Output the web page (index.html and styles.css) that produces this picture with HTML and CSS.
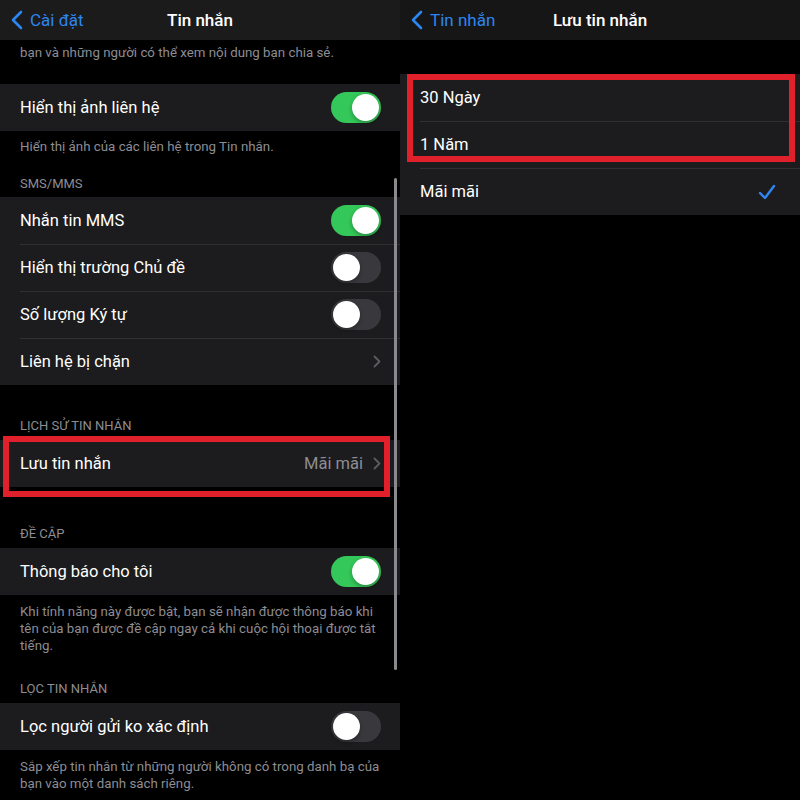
FILE: index.html
```html
<!DOCTYPE html>
<html lang="vi">
<head>
<meta charset="utf-8">
<title>Tin nhắn</title>
<link rel="stylesheet" href="styles.css">
</head>
<body>
<div class="screen">
  <section class="panel panel-left">
    <header class="nav nav-left">
      <div class="back">
        <svg class="back-chev" width="12" height="20" viewBox="0 0 12 20"><path d="M10 2 L2 10 L10 18" fill="none" stroke="#2d86f0" stroke-width="2.6" stroke-linecap="round" stroke-linejoin="round"/></svg>
        <span>Cài đặt</span>
      </div>
      <div class="nav-title">Tin nhắn</div>
    </header>

    <p class="note note-top">bạn và những người có thể xem nội dung bạn chia sẻ.</p>

    <div class="group">
      <div class="row"><span class="label">Hiển thị ảnh liên hệ</span><span class="toggle on"><span class="knob"></span></span></div>
    </div>
    <p class="note">Hiển thị ảnh của các liên hệ trong Tin nhắn.</p>

    <h2 class="sec sec-sms">SMS/MMS</h2>
    <div class="group">
      <div class="row"><span class="label">Nhắn tin MMS</span><span class="toggle on"><span class="knob"></span></span></div>
      <div class="row"><span class="label">Hiển thị trường Chủ đề</span><span class="toggle"><span class="knob"></span></span></div>
      <div class="row"><span class="label">Số lượng Ký tự</span><span class="toggle"><span class="knob"></span></span></div>
      <div class="row"><span class="label">Liên hệ bị chặn</span><svg class="chev" width="8" height="13" viewBox="0 0 8 13"><path d="M1.5 1.5 L6.5 6.5 L1.5 11.5" fill="none" stroke="#5c5c60" stroke-width="1.8" stroke-linecap="round" stroke-linejoin="round"/></svg></div>
    </div>

    <h2 class="sec sec-history">LỊCH SỬ TIN NHẮN</h2>
    <div class="group">
      <div class="row row-marked"><span class="label">Lưu tin nhắn</span><span class="value">Mãi mãi</span><svg class="chev" width="8" height="13" viewBox="0 0 8 13"><path d="M1.5 1.5 L6.5 6.5 L1.5 11.5" fill="none" stroke="#5c5c60" stroke-width="1.8" stroke-linecap="round" stroke-linejoin="round"/></svg></div>
    </div>

    <h2 class="sec sec-mention">ĐỀ CẬP</h2>
    <div class="group">
      <div class="row"><span class="label">Thông báo cho tôi</span><span class="toggle on"><span class="knob"></span></span></div>
    </div>
    <p class="note note-long">Khi tính năng này được bật, bạn sẽ nhận được thông báo khi tên của bạn được đề cập ngay cả khi cuộc hội thoại được tắt tiếng.</p>

    <h2 class="sec sec-filter">LỌC TIN NHẮN</h2>
    <div class="group">
      <div class="row"><span class="label">Lọc người gửi ko xác định</span><span class="toggle"><span class="knob"></span></span></div>
    </div>
    <p class="note note-long">Sắp xếp tin nhắn từ những người không có trong danh bạ của bạn vào một danh sách riêng.</p>

    <div class="scrollbar"></div>
  </section>

  <section class="panel panel-right">
    <header class="nav nav-right">
      <div class="back">
        <svg class="back-chev" width="12" height="20" viewBox="0 0 12 20"><path d="M10 2 L2 10 L10 18" fill="none" stroke="#2d86f0" stroke-width="2.6" stroke-linecap="round" stroke-linejoin="round"/></svg>
        <span>Tin nhắn</span>
      </div>
      <div class="nav-title">Lưu tin nhắn</div>
    </header>

    <div class="group group-options">
      <div class="row"><span class="label">30 Ngày</span></div>
      <div class="row"><span class="label">1 Năm</span></div>
      <div class="row"><span class="label">Mãi mãi</span><svg class="check" width="18" height="16" viewBox="0 0 18 16"><path d="M2 9 L7 14 L16 2" fill="none" stroke="#2f86f2" stroke-width="2.4" stroke-linecap="round" stroke-linejoin="round"/></svg></div>
      <div class="mark mark-options"></div>
    </div>
  </section>
</div>
</body>
</html>
```

FILE: styles.css
```css
*, *::before, *::after { box-sizing: border-box; }
html, body { margin: 0; padding: 0; background: #000; }
body {
  font-family: Roboto, "Noto Sans", "Liberation Sans", sans-serif;
  color: #fff;
  -webkit-font-smoothing: antialiased;
}
.screen {
  display: flex;
  width: 800px;
  height: 800px;
  overflow: hidden;
  background: #000;
}
.panel {
  position: relative;
  width: 400px;
  height: 800px;
  overflow: hidden;
  background: #000;
}
.nav {
  position: relative;
  height: 40px;
  display: flex;
  align-items: center;
  justify-content: center;
}
.nav-left { background: #1b1b1c; }
.nav-right { background: #161617; }
.back {
  position: absolute;
  left: 11px;
  top: 0;
  height: 40px;
  display: flex;
  align-items: center;
  gap: 7px;
  color: #2d86f0;
  font-size: 17px;
}
.back-chev { display: block; }
.nav-title {
  font-size: 17px;
  font-weight: 500;
  color: #fff;
}
.note {
  margin: 0;
  padding: 7px 16px 0 20px;
  font-size: 13.3px;
  line-height: 17px;
  color: #8d8d93;
}
.note-top { padding-top: 4px; margin-bottom: 23px; }
.note-long { padding-top: 8px; }
.sec {
  margin: 0;
  padding: 20px 20px 5px;
  font-size: 13px;
  line-height: 17px;
  font-weight: 400;
  color: #8d8d93;
}
.sec-history { padding-top: 32px; padding-bottom: 6px; }
.sec-mention { padding-top: 38px; padding-bottom: 6px; }
.sec-filter { padding-top: 26px; padding-bottom: 6px; }
.group {
  position: relative;
  background: #1c1c1e;
}
.row {
  position: relative;
  height: 47px;
  display: flex;
  align-items: center;
  padding: 0 20px;
}
.row + .row::before {
  content: "";
  position: absolute;
  left: 20px;
  right: 0;
  top: 0;
  height: 1px;
  background: #303033;
}
.label {
  flex: 1;
  font-size: 16.5px;
  color: #fff;
}
.value {
  font-size: 16.5px;
  color: #8d8d93;
  margin-right: 10px;
}
.chev { display: block; margin-right: -1px; }
.toggle {
  position: relative;
  width: 50px;
  height: 31px;
  border-radius: 16px;
  background: #39393d;
  margin-right: -1px;
}
.toggle.on { background: #34c759; }
.knob {
  position: absolute;
  top: 2px;
  left: 2px;
  width: 27px;
  height: 27px;
  border-radius: 50%;
  background: #fff;
  box-shadow: 0 2px 4px rgba(0,0,0,0.3);
}
.toggle.on .knob { left: 21px; }
.check { display: block; margin-right: 4px; }
.group-options { margin-top: 34px; }
.row-marked::after {
  content: "";
  position: absolute;
  left: 3px;
  width: 387px;
  top: -4px;
  height: 61px;
  border: 6px solid #e0202a;
}
.mark {
  position: absolute;
  border: 6px solid #e0202a;
}
.mark-options {
  left: 7px;
  top: 0;
  width: 388px;
  height: 88px;
}
.scrollbar {
  position: absolute;
  left: 394px;
  top: 178px;
  width: 3px;
  height: 492px;
  border-radius: 2px;
  background: #8a8a8e;
}
```
